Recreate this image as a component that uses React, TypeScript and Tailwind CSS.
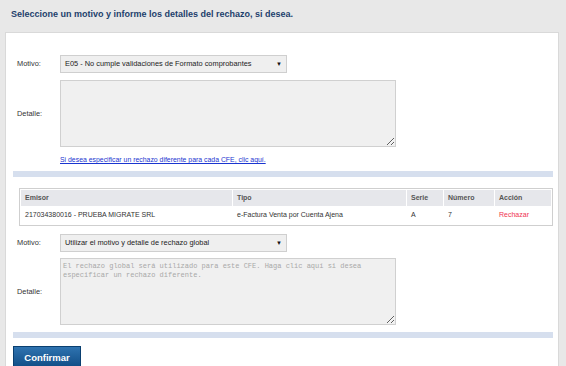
import React from 'react';

const rows = [
  {
    emisor: '217034380016 - PRUEBA MIGRATE SRL',
    tipo: 'e-Factura Venta por Cuenta Ajena',
    serie: 'A',
    numero: '7',
  },
];

const FakeSelect: React.FC<{ value: string }> = ({ value }) => (
  <div className="flex items-center justify-between w-[227px] h-[18px] bg-[#efefef] border border-[#cfcfcf] pl-[4px] pr-[4px] text-[7.4px] text-[#222]">
    <span>{value}</span>
    <span className="text-[6px] text-[#111]">▼</span>
  </div>
);

const App: React.FC = () => {
  return (
    <div
      className="min-h-[366px] bg-[#e8e8e8] overflow-hidden"
      style={{ fontFamily: '"Liberation Sans", Arial, sans-serif' }}
    >
      {/* Title */}
      <div className="h-[32px] pl-[11px] pt-[8px]">
        <h1 className="text-[9px] font-bold text-[#1d3f6c] leading-[12px]">
          Seleccione un motivo y informe los detalles del rechazo, si desea.
        </h1>
      </div>

      {/* Panel */}
      <div className="ml-[5px] mr-[7px] bg-white border border-[#d9d9d9] pl-[7px] pr-[5px] pt-[22px] pb-[20px]">
        <div className="flex items-center pl-[4px]">
          <label className="w-[43px] text-[7.4px] text-[#333]">Motivo:</label>
          <FakeSelect value="E05 - No cumple validaciones de Formato comprobantes" />
        </div>

        <div className="flex items-center pl-[4px] mt-[7px]">
          <label className="w-[43px] text-[7.4px] text-[#333]">Detalle:</label>
          <textarea
            readOnly
            className="w-[336px] h-[67px] bg-[#f0f0f0] border border-[#d0d0d0] outline-none"
          />
        </div>

        <div className="pl-[47px] mt-[8px] h-[10px] text-[6.9px] leading-[10px]">
          <a href="#" className="text-[#1a35d0] underline">
            Si desea especificar un rechazo diferente para cada CFE, clic aquí.
          </a>
        </div>

        <div className="h-[6px] bg-[#d6dfee] mt-[6px]" />

        {/* Table */}
        <div className="ml-[6px] mt-[11px] border border-[#cfcfcf]">
          <table className="w-full border-separate border-spacing-[1px] text-[7px]">
            <thead>
              <tr className="h-[16px]">
                <th className="w-[211px] bg-[#e6e7eb] text-left font-bold text-[#555] pl-[4px]">Emisor</th>
                <th className="w-[173px] bg-[#e6e7eb] text-left font-bold text-[#555] pl-[4px]">Tipo</th>
                <th className="w-[36px] bg-[#e6e7eb] text-left font-bold text-[#555] pl-[4px]">Serie</th>
                <th className="w-[50px] bg-[#e6e7eb] text-left font-bold text-[#555] pl-[4px]">Número</th>
                <th className="bg-[#e6e7eb] text-left font-bold text-[#555] pl-[4px]">Acción</th>
              </tr>
            </thead>
            <tbody>
              {rows.map((r) => (
                <tr key={r.numero} className="h-[17px] text-[#333]">
                  <td className="pl-[4px]">{r.emisor}</td>
                  <td className="pl-[4px]">{r.tipo}</td>
                  <td className="pl-[4px]">{r.serie}</td>
                  <td className="pl-[4px]">{r.numero}</td>
                  <td className="pl-[4px] text-[#f0334f]">Rechazar</td>
                </tr>
              ))}
            </tbody>
          </table>
        </div>

        <div className="flex items-center pl-[4px] mt-[8px]">
          <label className="w-[43px] text-[7.4px] text-[#333]">Motivo:</label>
          <FakeSelect value="Utilizar el motivo y detalle de rechazo global" />
        </div>

        <div className="flex items-center pl-[4px] mt-[6px]">
          <label className="w-[43px] text-[7.4px] text-[#333]">Detalle:</label>
          <textarea
            readOnly
            value="El rechazo global será utilizado para este CFE. Haga clic aquí si desea especificar un rechazo diferente."
            className="w-[336px] h-[67px] bg-[#f0f0f0] border border-[#d0d0d0] outline-none resize-y px-[2px] py-[3px] text-[7px] leading-[9px] text-[#a8a8a8]"
            style={{ fontFamily: '"Liberation Mono", "Courier New", monospace' }}
          />
        </div>

        <div className="h-[6px] bg-[#d6dfee] mt-[7px]" />

        <button className="mt-[8px] w-[68px] h-[24px] bg-gradient-to-b from-[#2f73b0] to-[#0c4a82] border border-[#0a3f70] text-white font-bold text-[9.5px]">
          Confirmar
        </button>
      </div>
    </div>
  );
};

export default App;
